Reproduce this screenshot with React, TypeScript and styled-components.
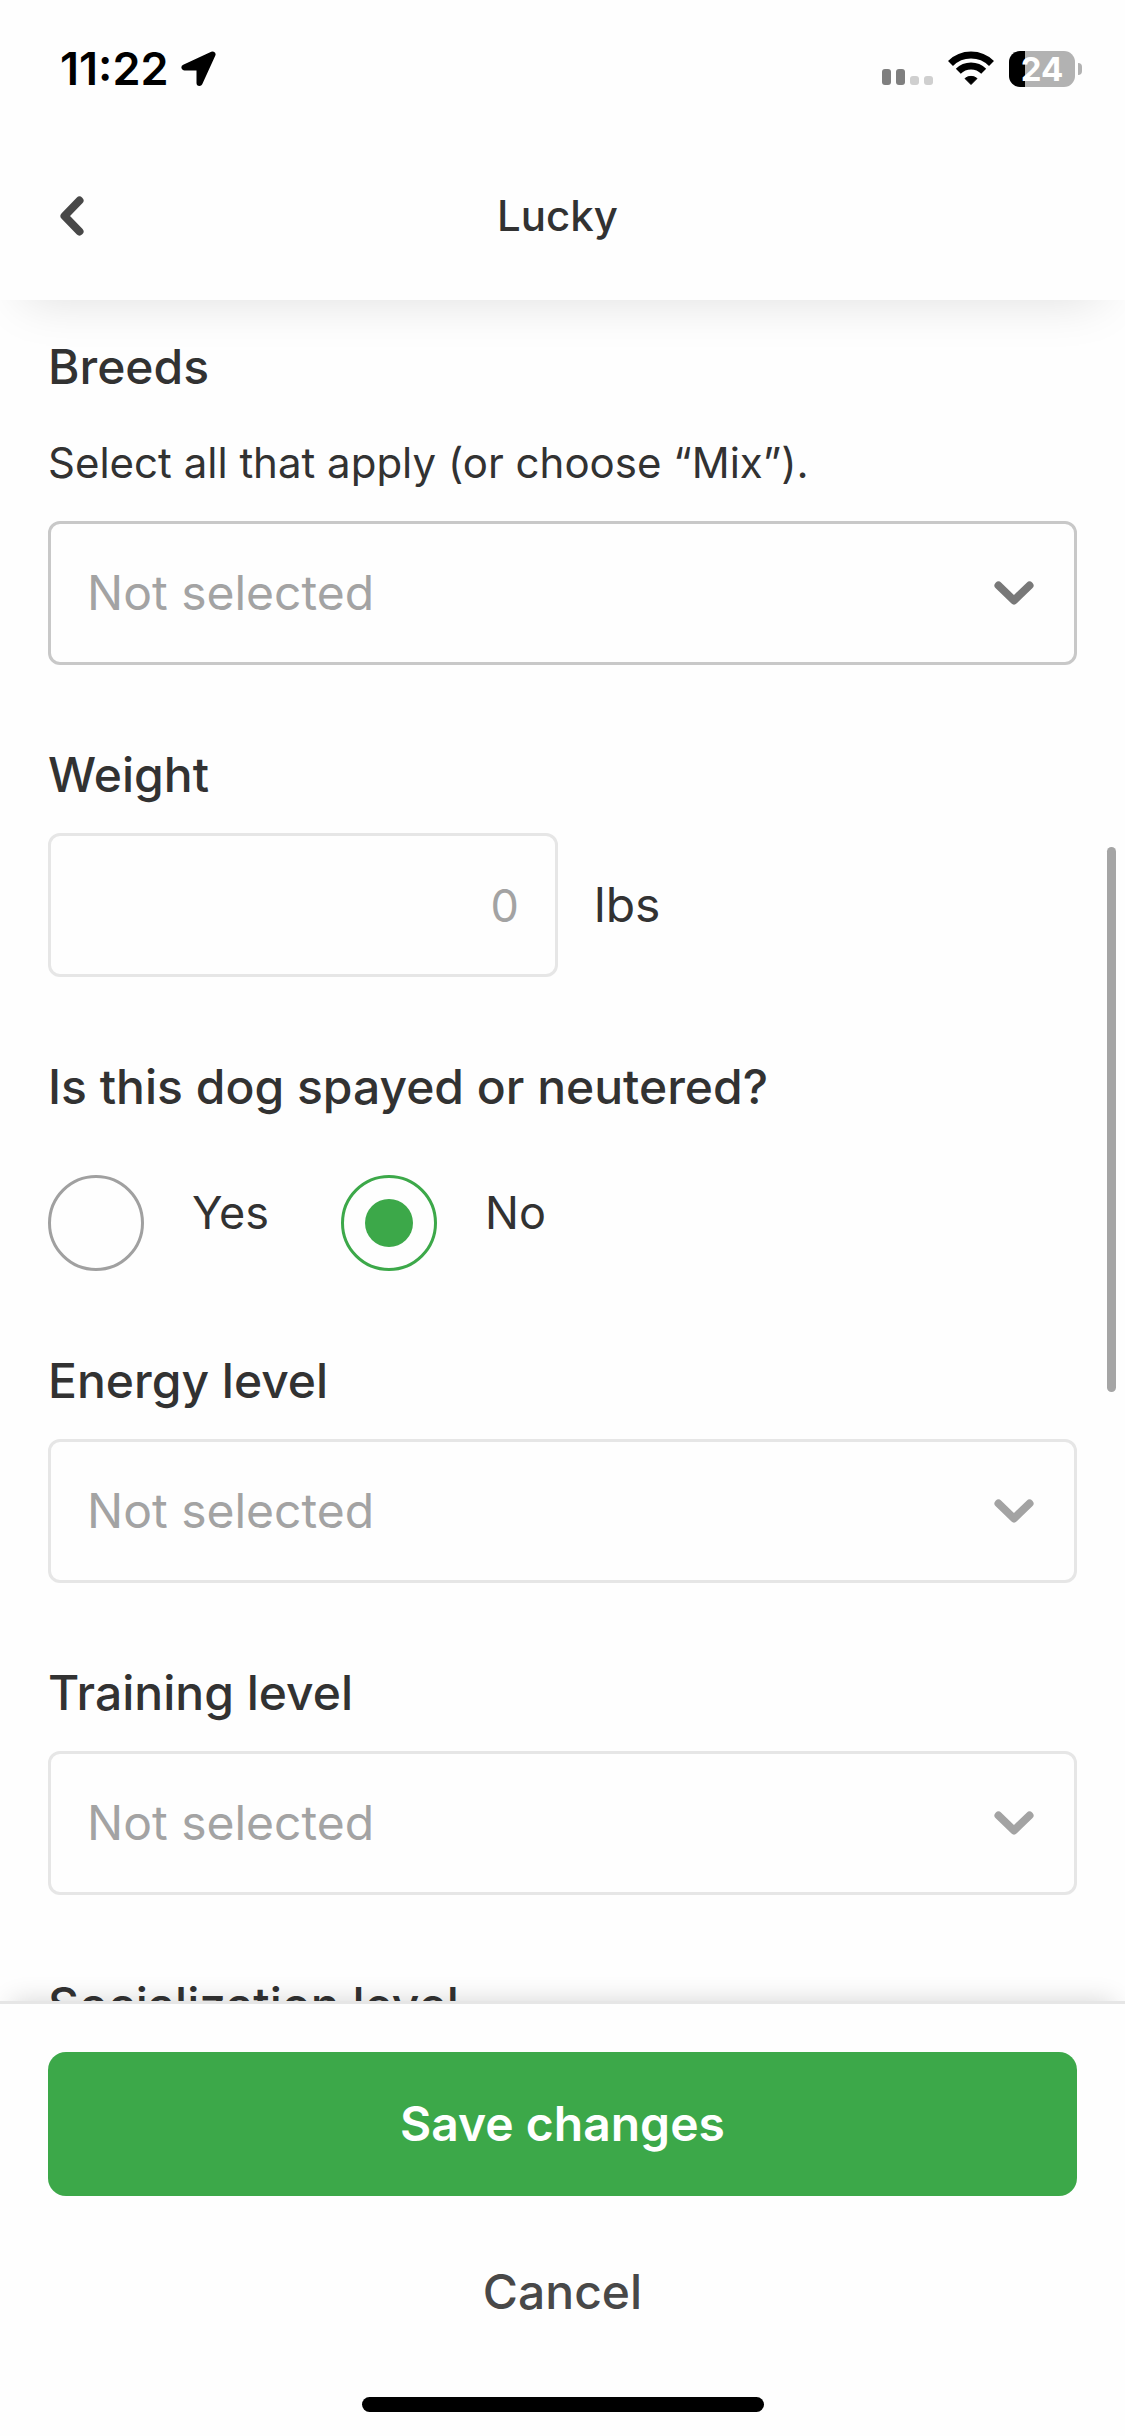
import React, { useState } from 'react';
import styled, { createGlobalStyle } from 'styled-components';

const color = {
  text: '#323232',
  soft: '#484848',
  placeholder: '#a3a3a3',
  line: '#e6e6e6',
  lineStrong: '#c8c8c8',
  green: '#3ca849',
};

const GlobalStyle = createGlobalStyle`
  *, *::before, *::after { box-sizing: border-box; }
  body {
    margin: 0;
    background: #fefefe;
    color: ${color.text};
    font-family: Inter, "Liberation Sans", sans-serif;
    font-size: 48px;
    line-height: 60px;
  }
  button, input, select { font: inherit; color: inherit; }
`;

const Screen = styled.div`
  display: flex;
  flex-direction: column;
  height: 100vh;
  overflow: hidden;
`;

const Top = styled.div`
  position: relative;
  z-index: 1;
  flex: none;
  background: #fefefe;
  box-shadow: 0 24px 48px -24px rgba(0, 0, 0, 0.13);
`;

const StatusBar = styled.div`
  display: flex;
  align-items: center;
  justify-content: space-between;
  height: 138px;
  padding: 0 43px 0 60px;
  color: #000;
`;

const StatusGroup = styled.div<{ $gap: number }>`
  display: flex;
  align-items: center;
  gap: ${(p) => p.$gap}px;
`;

const Clock = styled.time`
  font-size: 45px;
  font-weight: 600;
`;

const Battery = styled.div`
  display: flex;
  align-items: center;
  gap: 3px;
`;

const BatteryBody = styled.div`
  display: grid;
  place-items: center;
  width: 66px;
  height: 36px;
  border-radius: 11px;
  background: linear-gradient(to right, #000 24%, #b2b2b2 24%);
  color: #fff;
  font-size: 33px;
  font-weight: 700;
  line-height: 36px;
`;

const BatteryTip = styled.span`
  width: 4px;
  height: 12px;
  border-radius: 0 4px 4px 0;
  background: #b2b2b2;
`;

const Header = styled.header`
  display: grid;
  grid-template-columns: 96px 1fr 96px;
  align-items: center;
  height: 162px;
  padding: 0 34px 6px 24px;
`;

const BackButton = styled.button`
  display: grid;
  place-items: center;
  width: 96px;
  height: 96px;
  padding: 0;
  border: 0;
  background: none;
  color: ${color.soft};
`;

const Title = styled.h1`
  margin: 0;
  font-size: 42px;
  font-weight: 500;
  text-align: center;
`;

const Body = styled.div`
  position: relative;
  display: flex;
  flex: 1;
  flex-direction: column;
  min-height: 0;
`;

const Form = styled.form`
  display: flex;
  flex: 1;
  flex-direction: column;
  gap: 80px;
  min-height: 0;
  padding: 37px 48px 48px;
  overflow-y: auto;
  scrollbar-width: none;
`;

const ScrollThumb = styled.div`
  position: absolute;
  top: calc(32% + 3px);
  right: 9px;
  width: 9px;
  height: 32%;
  border-radius: 5px;
  background: #a5a5a5;
`;

const Field = styled.div`
  flex: none;
`;

const Label = styled.label`
  display: block;
  margin-bottom: 28px;
  font-weight: 500;
`;

const BreedsLabel = styled(Label)`
  margin-bottom: 36px;
`;

const Hint = styled.p`
  margin: 0 0 28px;
  font-size: 42px;
`;

const SelectBox = styled.div`
  display: grid;
  align-items: center;
`;

const Select = styled.select<{ $strong?: boolean }>`
  grid-area: 1 / 1;
  width: 100%;
  height: 144px;
  padding: 0 108px 0 36px;
  border: 3px solid ${(p) => (p.$strong ? color.lineStrong : color.line)};
  border-radius: 12px;
  background: transparent;
  color: ${color.placeholder};
  appearance: none;
`;

const SelectArrow = styled.span<{ $strong?: boolean }>`
  grid-area: 1 / 1;
  justify-self: end;
  display: flex;
  margin-right: 43px;
  color: ${(p) => (p.$strong ? '#787878' : color.placeholder)};
  pointer-events: none;
`;

const WeightRow = styled.div`
  display: flex;
  align-items: center;
  gap: 36px;
`;

const WeightInput = styled.input`
  width: 510px;
  min-width: 0;
  height: 144px;
  padding: 0 36px;
  border: 3px solid ${color.line};
  border-radius: 12px;
  background: transparent;
  font-size: 45px;
  text-align: right;
  &::placeholder { color: ${color.placeholder}; opacity: 1; }
`;

const RadioSet = styled.fieldset`
  flex: none;
  min-width: 0;
  margin: 0;
  padding: 0;
  border: 0;
`;

const Legend = styled.legend`
  margin-bottom: 58px;
  padding: 0;
  font-weight: 500;
`;

const RadioRow = styled.div`
  display: flex;
  gap: 72px;
`;

const RadioOption = styled.label`
  display: flex;
  gap: 48px;
  font-size: 45px;
  line-height: 76px;
`;

const Radio = styled.input`
  display: grid;
  place-items: center;
  width: 96px;
  height: 96px;
  margin: 0;
  border: 3px solid #a0a0a0;
  border-radius: 50%;
  appearance: none;
  &:checked { border-color: ${color.green}; }
  &:checked::before {
    content: "";
    width: 48px;
    height: 48px;
    border-radius: 50%;
    background: ${color.green};
  }
`;

const Footer = styled.footer`
  position: relative;
  z-index: 1;
  display: flex;
  flex: none;
  flex-direction: column;
  gap: 24px;
  padding: 48px 48px 24px;
  border-top: 3px solid ${color.line};
  background: #fefefe;
  box-shadow: 0 -12px 24px -12px rgba(0, 0, 0, 0.16);
`;

const Action = styled.button<{ $primary?: boolean }>`
  height: 144px;
  padding: 0;
  border: 0;
  border-radius: 18px;
  background: ${(p) => (p.$primary ? color.green : 'transparent')};
  color: ${(p) => (p.$primary ? '#fff' : color.soft)};
  font-weight: ${(p) => (p.$primary ? 600 : 500)};
`;

const HomeIndicator = styled.div`
  align-self: center;
  width: 402px;
  height: 15px;
  margin-top: 9px;
  border-radius: 8px;
  background: #000;
`;

const LocationIcon = () => (
  <svg width="36" height="36" viewBox="0 0 36 36" aria-hidden="true">
    <path
      d="M31.5 3.5 L3.5 16.5 H18.5 V32 Z"
      fill="currentColor"
      stroke="currentColor"
      strokeWidth="6"
      strokeLinejoin="round"
    />
  </svg>
);

const SignalIcon = () => (
  <svg width="51" height="36" viewBox="0 0 51 36" aria-hidden="true">
    <rect x="0" y="18" width="9" height="16" rx="3" fill="#7f7f7f" />
    <rect x="14" y="18" width="9" height="16" rx="3" fill="#7f7f7f" />
    <rect x="28" y="25" width="9" height="9" rx="3" fill="#cfcfcf" />
    <rect x="42" y="25" width="9" height="9" rx="3" fill="#cfcfcf" />
  </svg>
);

const WifiIcon = () => (
  <svg width="46" height="36" viewBox="0 0 46 36" aria-hidden="true">
    <g fill="none" stroke="currentColor" strokeWidth="7">
      <path d="M2.5 12.5 A29 29 0 0 1 43.5 12.5" />
      <path d="M10.3 20.3 A18 18 0 0 1 35.7 20.3" />
    </g>
    <path
      d="M17 27.5 A9.5 9.5 0 0 1 29 27.5 L23 33.5 Z"
      fill="currentColor"
      stroke="currentColor"
      strokeWidth="1"
      strokeLinejoin="round"
    />
  </svg>
);

const BackIcon = () => (
  <svg width="24" height="40" viewBox="0 0 24 40" aria-hidden="true">
    <path
      d="M19.5 4.5 L4.5 20 L19.5 35.5"
      fill="none"
      stroke="currentColor"
      strokeWidth="8"
      strokeLinecap="round"
      strokeLinejoin="round"
    />
  </svg>
);

const ArrowDownIcon = () => (
  <svg width="40" height="24" viewBox="0 0 40 24" aria-hidden="true">
    <path
      d="M4.5 4.5 L20 19.5 L35.5 4.5"
      fill="none"
      stroke="currentColor"
      strokeWidth="8"
      strokeLinecap="round"
      strokeLinejoin="round"
    />
  </svg>
);

const Unit = styled.span`
  font-size: 48px;
`;

function Dropdown({ id, strong }: { id: string; strong?: boolean }) {
  return (
    <SelectBox>
      <Select id={id} $strong={strong} defaultValue="">
        <option value="">Not selected</option>
      </Select>
      <SelectArrow $strong={strong}>
        <ArrowDownIcon />
      </SelectArrow>
    </SelectBox>
  );
}

const levels = [
  { id: 'energy', label: 'Energy level' },
  { id: 'training', label: 'Training level' },
  { id: 'socialization', label: 'Socialization level' },
];

export default function App() {
  const [fixed, setFixed] = useState('No');
  return (
    <Screen>
      <GlobalStyle />
      <Top>
        <StatusBar>
          <StatusGroup $gap={13}>
            <Clock>11:22</Clock>
            <LocationIcon />
          </StatusGroup>
          <StatusGroup $gap={15}>
            <SignalIcon />
            <WifiIcon />
            <Battery>
              <BatteryBody>24</BatteryBody>
              <BatteryTip />
            </Battery>
          </StatusGroup>
        </StatusBar>
        <Header>
          <BackButton type="button" aria-label="Back">
            <BackIcon />
          </BackButton>
          <Title>Lucky</Title>
        </Header>
      </Top>

      <Body>
        <Form id="dog-profile">
          <Field>
            <BreedsLabel htmlFor="breeds">Breeds</BreedsLabel>
            <Hint>Select all that apply (or choose “Mix”).</Hint>
            <Dropdown id="breeds" strong />
          </Field>

          <Field>
            <Label htmlFor="weight">Weight</Label>
            <WeightRow>
              <WeightInput id="weight" type="text" inputMode="numeric" placeholder="0" />
              <Unit>lbs</Unit>
            </WeightRow>
          </Field>

          <RadioSet>
            <Legend>Is this dog spayed or neutered?</Legend>
            <RadioRow>
              {['Yes', 'No'].map((answer) => (
                <RadioOption key={answer}>
                  <Radio
                    type="radio"
                    name="fixed"
                    value={answer}
                    checked={fixed === answer}
                    onChange={() => setFixed(answer)}
                  />
                  {answer}
                </RadioOption>
              ))}
            </RadioRow>
          </RadioSet>

          {levels.map(({ id, label }) => (
            <Field key={id}>
              <Label htmlFor={id}>{label}</Label>
              <Dropdown id={id} />
            </Field>
          ))}
        </Form>
        <ScrollThumb />
      </Body>

      <Footer>
        <Action type="submit" form="dog-profile" $primary>
          Save changes
        </Action>
        <Action type="button">Cancel</Action>
        <HomeIndicator />
      </Footer>
    </Screen>
  );
}
